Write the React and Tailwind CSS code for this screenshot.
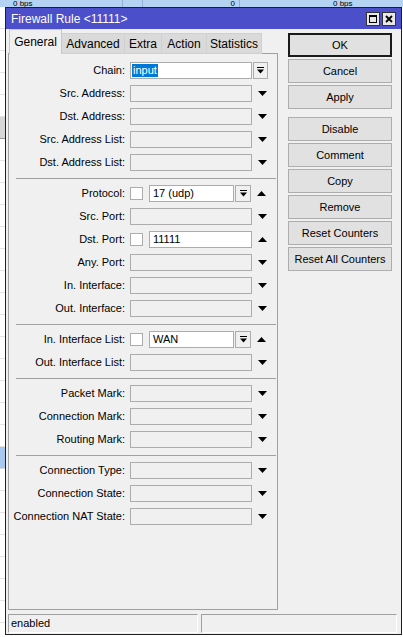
import React from 'react';

const font = { fontFamily: '"Liberation Sans", Arial, sans-serif' };

const Tri = ({ up }) => (
  <svg width="9" height="5" viewBox="0 0 9 5">
    <path d={up ? 'M0 5L4.5 0L9 5Z' : 'M0 0L9 0L4.5 5Z'} fill="#000" />
  </svg>
);

const DropBtn = ({ w = 'w-[15px]' }) => (
  <div className={`${w} h-[17px] border border-[#acacac] bg-[#f0f0f0] flex items-center justify-center`}>
    <svg width="7" height="7" viewBox="0 0 7 7">
      <rect x="0" y="0" width="7" height="1" fill="#000" />
      <path d="M0 2.5L7 2.5L3.5 6.5Z" fill="#000" />
    </svg>
  </div>
);

const Label = ({ children }) => (
  <div className="w-[117px] text-right pr-[1px] text-[11px] text-black whitespace-nowrap leading-none">{children}</div>
);

const Empty = () => <div className="w-[122px] h-[17px] border border-[#acacac] bg-[#f0f0f0]" />;

const Check = () => <div className="w-[13px] h-[13px] border border-[#acacac] bg-white" />;

const Row = ({ label, children }) => (
  <div className="h-[23px] flex items-center">
    <Label>{label}</Label>
    <div className="ml-[4px] flex items-center">{children}</div>
  </div>
);

const EmptyRow = ({ label }) => (
  <Row label={label}>
    <Empty />
    <div className="ml-[6px]">
      <Tri />
    </div>
  </Row>
);

const Sep = () => (
  <div className="h-[8px] flex items-center pl-[7px]">
    <div className="h-px w-full bg-[#a0a0a0]" />
  </div>
);

const Btn = ({ children, def }) => (
  <button
    className={`w-[104px] h-[24px] ${def ? 'border-2 border-[#1a1a1a]' : 'border border-[#adadad]'} bg-[#e1e1e1] text-[11px] text-black leading-none`}
  >
    {children}
  </button>
);

export default function App() {
  const tabs = ['Advanced', 'Extra', 'Action', 'Statistics'];
  const tabW = ['w-[63px]', 'w-[37px]', 'w-[45px]', 'w-[55px]'];

  return (
    <div className="relative w-[403px] h-[637px] bg-white overflow-hidden" style={font}>
      {/* list behind the window */}
      <div className="h-[7px] bg-[#b4d3f2] flex text-[8px] leading-[7px] overflow-hidden">
        <div className="w-[123px] border-r border-[#8fb0d6] pl-[13px]">0 bps</div>
        <div className="w-[20px] border-r border-[#8fb0d6]" />
        <div className="w-[97px] border-r border-[#8fb0d6] text-right pr-[4px]">0</div>
        <div className="flex-1 pl-[93px]">0 bps</div>
      </div>
      <div className="w-[5px] flex flex-col">
        {Array.from({ length: 28 }).map((_, i) => (
          <div
            key={i}
            className={`h-[22px] border-b ${i === 5 ? 'bg-[#d6d6d6] border-[#999]' : i === 20 ? 'bg-[#a7c9f0] border-[#ddd]' : 'border-[#e3e3e3]'}`}
          />
        ))}
      </div>

      {/* window */}
      <div className="absolute left-[5px] top-[7px] w-[397px] h-[628px] border border-[#1f1f1f] bg-[#f0f0f0] flex flex-col">
        <div className="h-[21px] bg-[#4b4fca] flex items-center pl-[5px] pr-[5px]">
          <div className="text-white text-[12px] flex-1">Firewall Rule &lt;11111&gt;</div>
          <div className="w-[14px] h-[14px] bg-[#e8e8e8] border border-[#333] flex items-center justify-center">
            <div className="w-[8px] h-[8px] border border-black border-t-2" />
          </div>
          <div className="w-[14px] h-[14px] ml-[2px] bg-[#e8e8e8] border border-[#333] flex items-center justify-center">
            <svg width="8" height="8" viewBox="0 0 8 8">
              <path d="M1 1L7 7M7 1L1 7" stroke="#000" strokeWidth="1.8" />
            </svg>
          </div>
        </div>

        <div className="flex flex-1 pl-[2px] pt-[1px]">
          <div className="w-[270px] flex flex-col">
            <div className="flex items-end h-[24px] pl-[1px] relative z-10">
              <div className="w-[53px] h-[25px] border border-b-0 border-[#c8c8c8] bg-[#f0f0f0] text-[12px] flex items-center justify-center pb-[1px]">
                General
              </div>
              {tabs.map((t, i) => (
                <div
                  key={t}
                  className={`${tabW[i]} h-[21px] border border-l-0 border-[#d0d0d0] bg-[#dadada] text-[12px] flex items-center justify-center`}
                >
                  {t}
                </div>
              ))}
            </div>
            <div className="h-[557px] -mt-px border border-[#a0a0a0] bg-[#f0f0f0] pt-[5px] pr-[1px]">
              <Row label="Chain:">
                <div className="w-[122px] h-[17px] border border-[#acacac] bg-white flex items-center pl-[1px]">
                  <span className="bg-[#0078d7] text-white text-[11px] leading-[13px] px-[1px]">input</span>
                </div>
                <div className="ml-[1px]">
                  <DropBtn />
                </div>
              </Row>
              <EmptyRow label="Src. Address:" />
              <EmptyRow label="Dst. Address:" />
              <EmptyRow label="Src. Address List:" />
              <EmptyRow label="Dst. Address List:" />
              <Sep />
              <Row label="Protocol:">
                <Check />
                <div className="ml-[6px] w-[85px] h-[17px] border border-[#acacac] bg-white text-[11px] flex items-center pl-[3px]">
                  17 (udp)
                </div>
                <div className="ml-[1px]">
                  <DropBtn w="w-[16px]" />
                </div>
                <div className="ml-[6px]">
                  <Tri up />
                </div>
              </Row>
              <EmptyRow label="Src. Port:" />
              <Row label="Dst. Port:">
                <Check />
                <div className="ml-[6px] w-[103px] h-[17px] border border-[#acacac] bg-white text-[11px] flex items-center pl-[3px]">
                  11111
                </div>
                <div className="ml-[6px]">
                  <Tri up />
                </div>
              </Row>
              <EmptyRow label="Any. Port:" />
              <EmptyRow label="In. Interface:" />
              <EmptyRow label="Out. Interface:" />
              <Sep />
              <Row label="In. Interface List:">
                <Check />
                <div className="ml-[6px] w-[85px] h-[17px] border border-[#acacac] bg-white text-[11px] flex items-center pl-[3px]">
                  WAN
                </div>
                <div className="ml-[1px]">
                  <DropBtn w="w-[16px]" />
                </div>
                <div className="ml-[6px]">
                  <Tri up />
                </div>
              </Row>
              <EmptyRow label="Out. Interface List:" />
              <Sep />
              <EmptyRow label="Packet Mark:" />
              <EmptyRow label="Connection Mark:" />
              <EmptyRow label="Routing Mark:" />
              <Sep />
              <EmptyRow label="Connection Type:" />
              <EmptyRow label="Connection State:" />
              <EmptyRow label="Connection NAT State:" />
            </div>
          </div>

          <div className="ml-[10px] pt-[3px] flex flex-col gap-[2px]">
            <Btn def>OK</Btn>
            <Btn>Cancel</Btn>
            <Btn>Apply</Btn>
            <div className="h-[4px]" />
            <Btn>Disable</Btn>
            <Btn>Comment</Btn>
            <Btn>Copy</Btn>
            <Btn>Remove</Btn>
            <Btn>Reset Counters</Btn>
            <Btn>Reset All Counters</Btn>
          </div>
        </div>

        <div className="h-[22px] flex pl-[2px] pr-[4px] pt-[2px] pb-[1px] gap-[3px]">
          <div className="w-[190px] h-[19px] border-t border-l border-[#a0a0a0] border-r border-b border-r-white border-b-white text-[11px] flex items-center pl-[2px]">
            enabled
          </div>
          <div className="flex-1 h-[19px] border-t border-l border-[#a0a0a0] border-r border-b border-r-white border-b-white" />
        </div>
      </div>
    </div>
  );
}
